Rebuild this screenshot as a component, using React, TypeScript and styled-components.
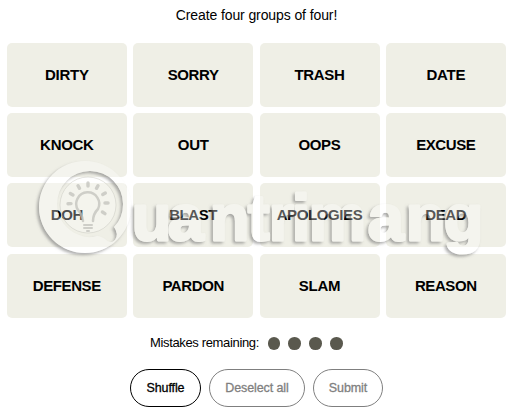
import React from "react";
import styled, { createGlobalStyle } from "styled-components";

const GlobalStyle = createGlobalStyle`
  * { box-sizing: border-box; }
  body { margin: 0; background: #fff; font-family: "Liberation Sans", Arial, sans-serif; color: #000; }
`;

const Game = styled.main`
  position: relative;
  width: 518px;
  height: 418px;
  padding: 6px 12px 0 7px;
  overflow: hidden;
`;

const Heading = styled.p`
  margin: 0;
  height: 37px;
  line-height: 18px;
  font-size: 14px;
  text-align: center;
`;

const Fit = styled.span<{ $spacing: number }>`
  letter-spacing: ${(p) => p.$spacing}px;
  margin-right: ${(p) => -p.$spacing}px;
  white-space: nowrap;
`;

const Board = styled.section`
  display: grid;
  grid-template-columns: repeat(4, 120px);
  grid-template-rows: repeat(4, 64px);
  gap: 6.24px 6.33px;
`;

const Tile = styled.button`
  display: flex;
  align-items: center;
  justify-content: center;
  padding: 0;
  border: 0;
  border-radius: 5px;
  background: #efefe6;
  color: #000;
  font: bold 15px/18px "Liberation Sans", Arial, sans-serif;
`;

const Mistakes = styled.div`
  display: flex;
  align-items: center;
  height: 18px;
  margin: 16.3px 0 0 143px;
  font-size: 13px;
`;

const MistakeLabel = styled.span`
  width: 117.6px;
  line-height: 18px;
`;

const Dots = styled.div`
  display: flex;
  gap: 8.1px;
  margin-top: 1px;
`;

const Dot = styled.span`
  width: 12.7px;
  height: 12.7px;
  border-radius: 50%;
  background: #5a594e;
`;

const Actions = styled.div`
  display: flex;
  gap: 8px;
  margin: 17px 0 0 123px;
`;

const Action = styled.button<{ $width: number; $active?: boolean }>`
  width: ${(p) => p.$width}px;
  height: 38px;
  padding: 0;
  border: 1px solid ${(p) => (p.$active ? "#000" : "#7f7f7f")};
  border-radius: 19px;
  background: #fff;
  color: ${(p) => (p.$active ? "#000" : "#7f7f7f")};
  font: 12.5px/18px "Liberation Sans", Arial, sans-serif;
  -webkit-text-stroke: 0.3px currentColor;
`;

const Watermark = styled.svg`
  position: absolute;
  inset: 0;
  pointer-events: none;
`;

const words: [string, number][] = [
  ["DIRTY", -0.2], ["SORRY", -0.4], ["TRASH", -0.3], ["DATE", -0.3],
  ["KNOCK", -0.3], ["OUT", -0.3], ["OOPS", -0.4], ["EXCUSE", -0.4],
  ["DOH", -0.4], ["BLAST", -0.4], ["APOLOGIES", -0.4], ["DEAD", -0.4],
  ["DEFENSE", -0.4], ["PARDON", -0.4], ["SLAM", -0.3], ["REASON", -0.4],
];

const rays = [-92, -62, -30, 0, 30, 60, 90, 122];

export default function App() {
  return (
    <>
      <GlobalStyle />
      <Game>
        <Heading><Fit $spacing={-0.1}>Create four groups of four!</Fit></Heading>
        <Board>
          {words.map(([word, spacing]) => (
            <Tile key={word}><Fit $spacing={spacing}>{word}</Fit></Tile>
          ))}
        </Board>
        <Mistakes>
          <MistakeLabel><Fit $spacing={-0.35}>Mistakes remaining:</Fit></MistakeLabel>
          <Dots><Dot /><Dot /><Dot /><Dot /></Dots>
        </Mistakes>
        <Actions>
          <Action $width={71} $active><Fit $spacing={-0.1}>Shuffle</Fit></Action>
          <Action $width={96}><Fit $spacing={-0.1}>Deselect all</Fit></Action>
          <Action $width={70}><Fit $spacing={-0.1}>Submit</Fit></Action>
        </Actions>
        <Watermark width="518" height="418" viewBox="0 0 518 418" aria-hidden="true">
          <defs>
            <filter id="emboss" x="-10%" y="-20%" width="120%" height="150%">
              <feGaussianBlur in="SourceAlpha" stdDeviation="1.4" />
              <feOffset dx="-1.6" dy="1.6" result="soft" />
              <feComposite in="soft" in2="SourceAlpha" operator="out" result="edge" />
              <feFlood floodColor="#777" floodOpacity="0.6" />
              <feComposite in2="edge" operator="in" result="shade" />
              <feComponentTransfer in="SourceGraphic" result="face">
                <feFuncA type="linear" slope="0.34" />
              </feComponentTransfer>
              <feMerge><feMergeNode in="shade" /><feMergeNode in="face" /></feMerge>
            </filter>
          </defs>
          <path
            filter="url(#emboss)"
            fill="#fff"
            fillRule="evenodd"
            d="M39 207a46 46 0 1 0 92 0a46 46 0 1 0 -92 0Z M57 204A33 33 0 0 1 123 204Q123 218 114 227Q119 234 115 240Q110 245 105 239Q100 236 97 236Q88 239 79 235A33 33 0 0 1 57 204Z"
          />
          <circle cx="88" cy="205" r="28" fill="#fff" fillOpacity="0.3" stroke="#c9c9c2" strokeOpacity="0.5" />
          <g fill="none" stroke="#c2c2bb" strokeOpacity="0.75" strokeLinecap="round">
            <path d="M83 221Q82 214 78 210A11.5 11.5 0 1 1 98 209Q93 214 93 221" strokeWidth="2.5" />
            <path d="M84 225H92M84 228H92M87 231H89" strokeWidth="2" />
            {rays.map((angle) => (
              <path key={angle} d="M88 186V183" strokeWidth="3.4" transform={`rotate(${angle} 88 203)`} />
            ))}
          </g>
          <text
            x="132 168 210 248 269 292 309 368 406 444"
            y="240"
            filter="url(#emboss)"
            fill="#fff"
            stroke="#fff"
            strokeWidth="3"
            strokeLinejoin="round"
            fontFamily="Liberation Sans, sans-serif"
            fontWeight="700"
            fontSize="64"
          >uantrimang</text>
        </Watermark>
      </Game>
    </>
  );
}
